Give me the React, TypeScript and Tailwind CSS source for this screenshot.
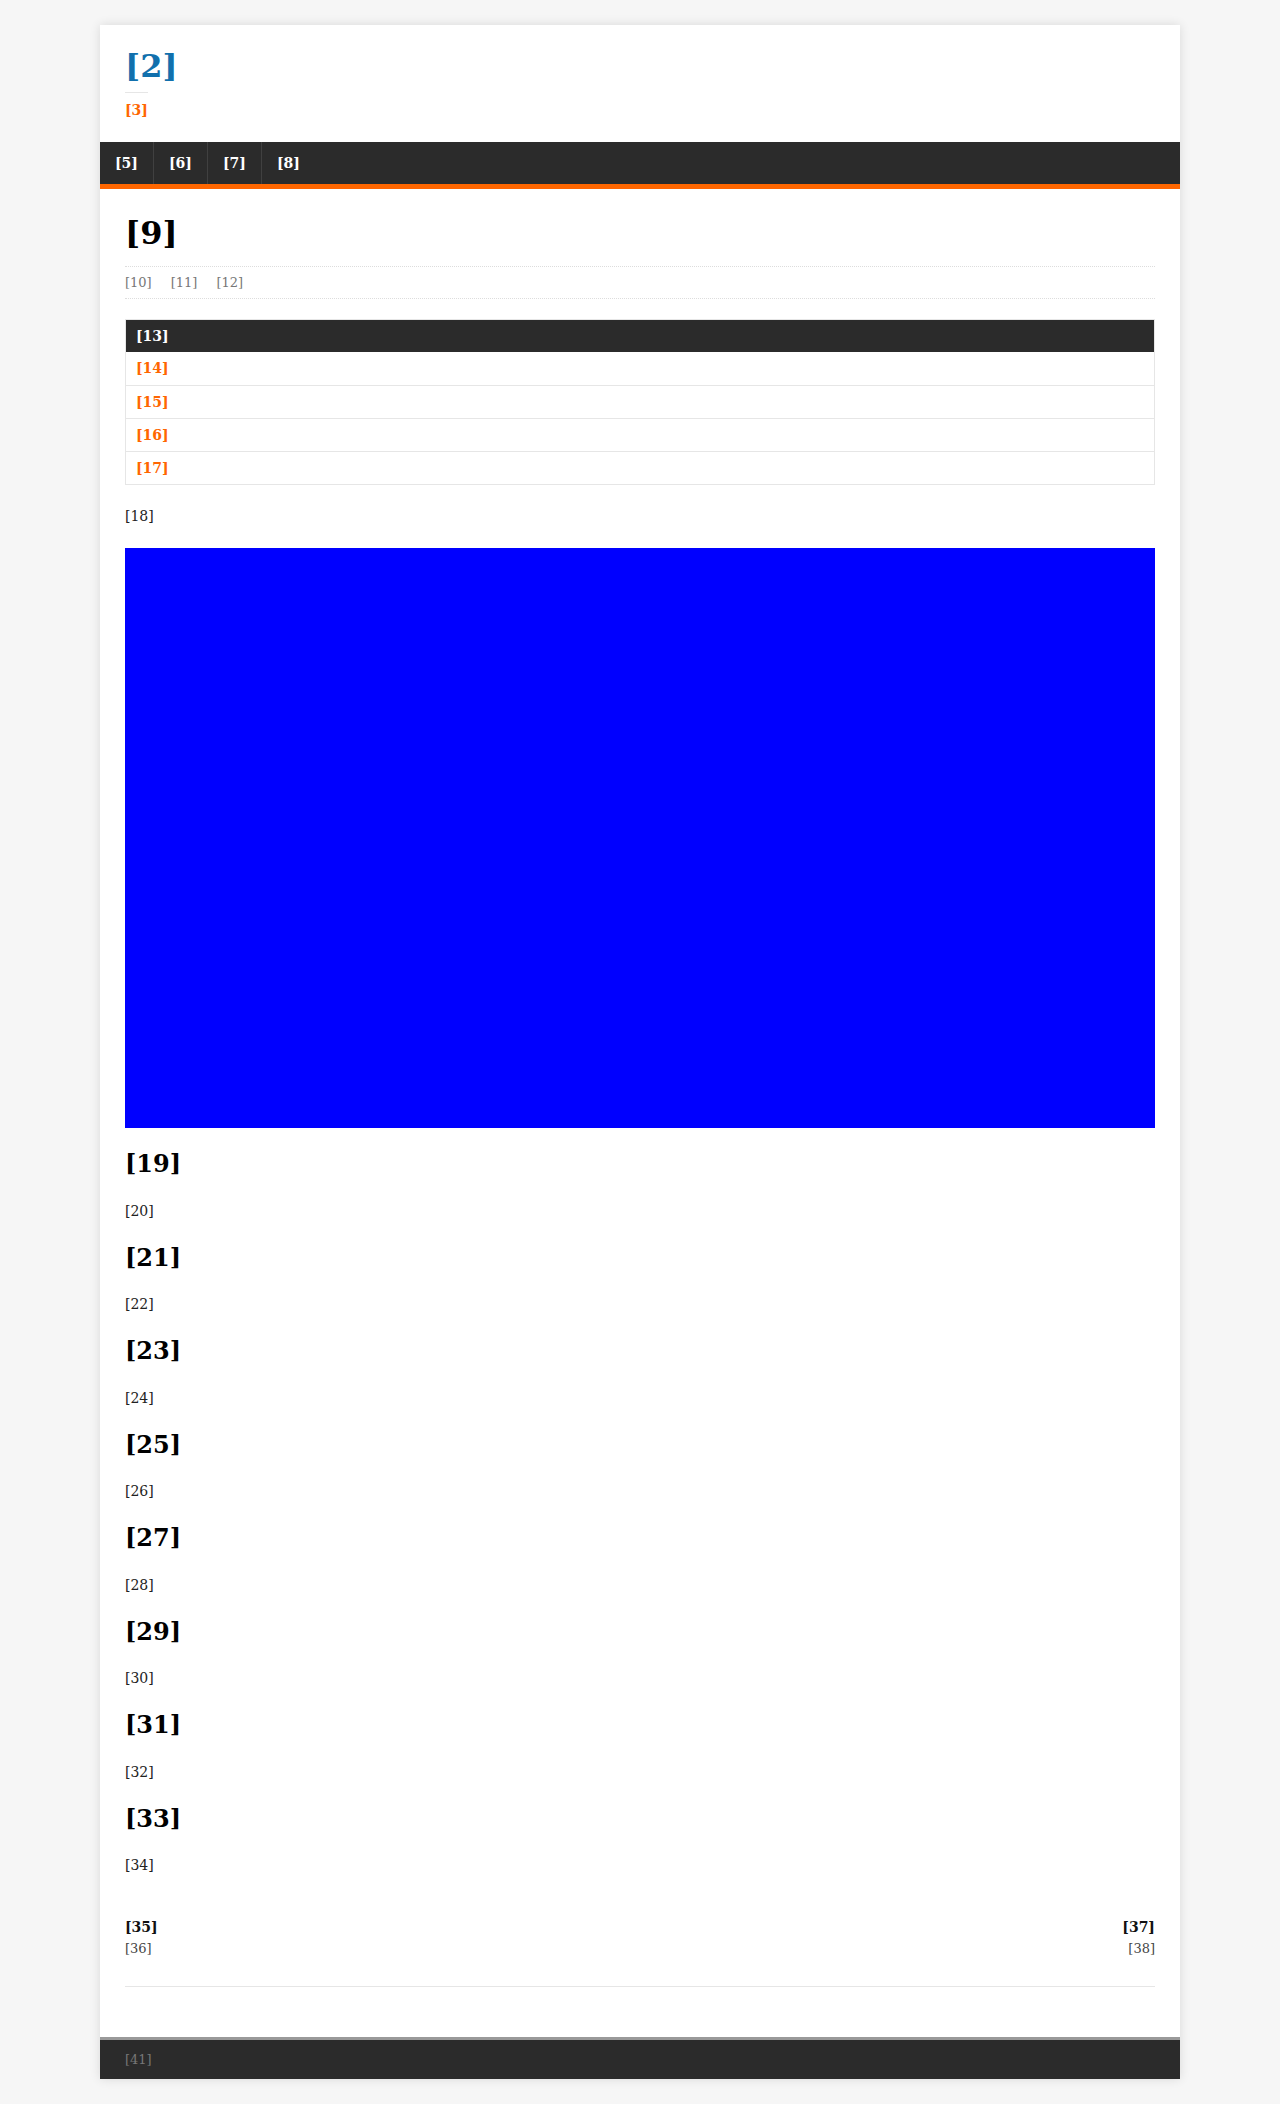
import React from "react";

const serif = { fontFamily: '"DejaVu Serif", "Liberation Serif", serif' };

export default function App() {
  const sections = [
    ["[19]", "[20]"],
    ["[21]", "[22]"],
    ["[23]", "[24]"],
    ["[25]", "[26]"],
    ["[27]", "[28]"],
    ["[29]", "[30]"],
    ["[31]", "[32]"],
    ["[33]", "[34]"],
  ];
  return (
    <div className="min-h-[2104px] bg-[#f6f6f6] pt-[25px] pb-[25px]" style={serif}>
      <div className="mx-auto w-[1080px] bg-white shadow-[0_0_10px_rgba(0,0,0,0.12)]">
        {/* header */}
        <div className="h-[117px] px-[25px] pt-[21px]">
          <h1 className="text-[32px] font-bold leading-[40px] text-[#1170ad]">[2]</h1>
          <div className="mt-[6px] w-[23px] border-t border-[#e6e6e6]" />
          <div className="mt-[8px] text-[14px] font-bold leading-[18px] text-[#ff6600]">[3]</div>
        </div>
        {/* nav */}
        <nav className="flex h-[47px] border-b-[5px] border-[#ff6600] bg-[#2b2b2b]">
          {["[5]", "[6]", "[7]", "[8]"].map((t, i) => (
            <a
              key={t}
              className={`flex h-[42px] items-center px-[15px] text-[14px] font-bold text-white ${i < 3 ? "border-r border-[#404040]" : ""}`}
            >
              {t}
            </a>
          ))}
        </nav>
        {/* content */}
        <div className="px-[25px] pt-[22px]">
          <h2 className="text-[32px] font-bold leading-[44px] text-black">[9]</h2>
          <div className="mt-[11px] flex h-[33px] items-center gap-[19px] border-y border-dotted border-[#dddddd] text-[13px] text-[#777777]">
            <span>[10]</span>
            <span>[11]</span>
            <span>[12]</span>
          </div>
          <div className="mt-[20px] border border-[#e6e6e6]">
            <div className="flex h-[32px] items-center bg-[#2b2b2b] px-[10px] text-[14px] font-bold text-white">[13]</div>
            {["[14]", "[15]", "[16]", "[17]"].map((t, i) => (
              <div
                key={t}
                className={`flex h-[33px] items-center px-[10px] text-[14px] font-bold text-[#ff6600] ${i > 0 ? "border-t border-[#e6e6e6]" : ""}`}
              >
                {t}
              </div>
            ))}
          </div>
          <p className="mt-[20px] text-[14px] leading-[22px] text-[#222222]">[18]</p>
          <div className="mt-[21px] h-[580px] w-full bg-[#0000ff]" />
          {sections.map(([h, p]) => (
            <div key={h}>
              <h3 className="mt-[20px] text-[24px] font-bold leading-[32px] text-black">{h}</h3>
              <p className="mt-[19.5px] text-[14px] leading-[22px] text-[#222222]">{p}</p>
            </div>
          ))}
          <div className="mt-[41px] flex justify-between pb-[27px]">
            <div>
              <div className="text-[14px] font-bold leading-[21px] text-[#111111]">[35]</div>
              <div className="text-[13px] leading-[21px] text-[#444444]">[36]</div>
            </div>
            <div className="text-right">
              <div className="text-[14px] font-bold leading-[21px] text-[#111111]">[37]</div>
              <div className="text-[13px] leading-[21px] text-[#444444]">[38]</div>
            </div>
          </div>
          <div className="border-t border-[#e6e6e6]" />
          <div className="h-[50px]" />
        </div>
        {/* footer */}
        <footer className="flex h-[42px] items-center border-t-[3px] border-[#999999] bg-[#2b2b2b] px-[25px] text-[13px] text-[#777777]">
          [41]
        </footer>
      </div>
    </div>
  );
}
